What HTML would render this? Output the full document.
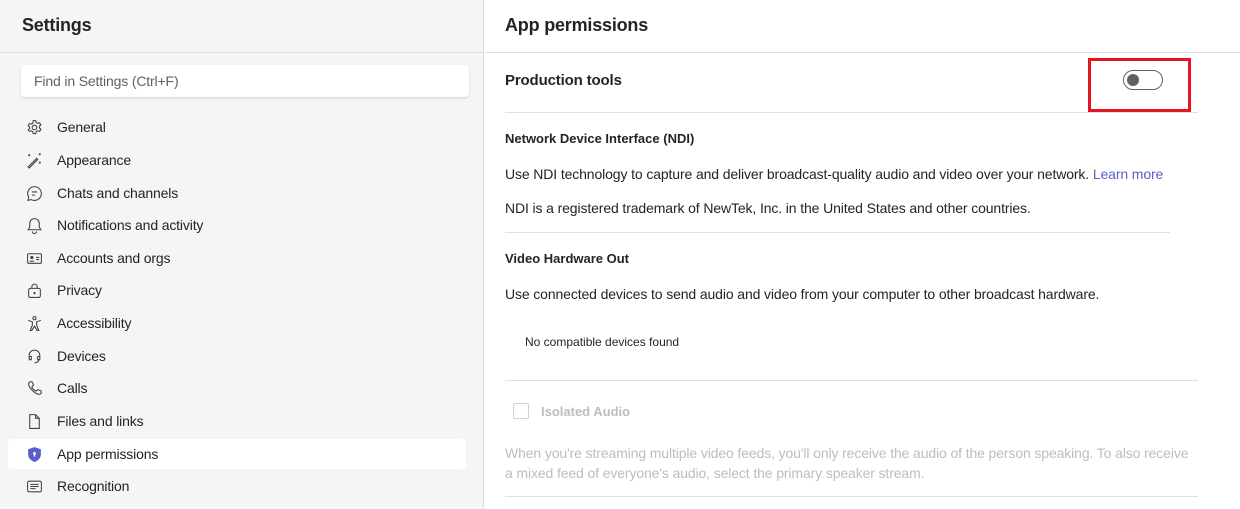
<!DOCTYPE html>
<html><head><style>
*{margin:0;padding:0;box-sizing:border-box}
body{width:1240px;height:509px;overflow:hidden;font-family:"Liberation Sans",sans-serif;color:#242424;background:#fff;position:relative}
.a{position:absolute;white-space:nowrap}
#left{position:absolute;left:0;top:0;width:484px;height:509px;background:#f5f5f5;border-right:1px solid #e0e0e0}
.nav{position:absolute;left:8px;width:458px;height:30px;font-size:14px;line-height:30px;padding-left:49px;letter-spacing:-0.15px}
.nav svg{position:absolute;left:18px;top:7px}
.sel{background:#fff;border-radius:4px}
.hr{position:absolute;height:1px;background:#e0e0e0}
.t{font-size:14px;letter-spacing:-0.12px}
</style></head><body>
<div id="left">
<div class="a" style="left:22px;top:15px;font-size:18px;font-weight:bold;letter-spacing:-0.2px">Settings</div>
<div class="hr" style="left:0;top:52px;width:484px"></div>
<div class="a" style="left:21px;top:65px;width:448px;height:32px;background:#fff;border-radius:4px;box-shadow:0 1px 2px rgba(0,0,0,.15);font-size:14px;line-height:32px;padding-left:13px;color:#616161;letter-spacing:-0.15px">Find in Settings (Ctrl+F)</div>

<div class="nav" style="top:112px"><svg width="17" height="17" viewBox="0 0 16 16" fill="none" stroke="#424242" stroke-width="1"><circle cx="8" cy="8" r="2.2"/><path d="M6.8 1.5h2.4l.4 1.8 1.4.8 1.8-.6 1.2 2.1-1.4 1.2v1.6l1.4 1.2-1.2 2.1-1.8-.6-1.4.8-.4 1.8H6.8l-.4-1.8-1.4-.8-1.8.6L2 10.3l1.4-1.2V7.5L2 6.3l1.2-2.1 1.8.6 1.4-.8z"/></svg>General</div>
<div class="nav" style="top:145px"><svg width="17" height="17" viewBox="0 0 16 16" fill="none" stroke="#424242" stroke-width="1"><path d="M2 14l8-8 1 1-8 8zM3 2v2M2 3h2M13 1v2M12 2h2M13 9v2M12 10h2"/></svg>Appearance</div>
<div class="nav" style="top:178px"><svg width="17" height="17" viewBox="0 0 16 16" fill="none" stroke="#424242" stroke-width="1"><path d="M8 1.5a6.5 6.5 0 1 1-3.2 12.2L1.8 14.5l.8-3A6.5 6.5 0 0 1 8 1.5zM5.5 6.5h5M5.5 9.5h3"/></svg>Chats and channels</div>
<div class="nav" style="top:210px"><svg width="17" height="17" viewBox="0 0 16 16" fill="none" stroke="#424242" stroke-width="1"><path d="M8 1.5c2.5 0 4.5 2 4.5 4.5v3.5l1.5 2.5H2l1.5-2.5V6c0-2.5 2-4.5 4.5-4.5zM6 13.5a2 2 0 0 0 4 0"/></svg>Notifications and activity</div>
<div class="nav" style="top:243px"><svg width="17" height="17" viewBox="0 0 16 16" fill="none" stroke="#424242" stroke-width="1"><rect x="1.5" y="3.5" width="13" height="9" rx="1"/><circle cx="5.5" cy="7" r="1" fill="#424242"/><path d="M3.5 10.5h4M9.5 7h3M9.5 9h3"/></svg>Accounts and orgs</div>
<div class="nav" style="top:275px"><svg width="17" height="17" viewBox="0 0 16 16" fill="none" stroke="#424242" stroke-width="1"><rect x="2.5" y="6" width="11" height="8.5" rx="1.5"/><path d="M5.5 6V4.5a2.5 2.5 0 0 1 5 0V6"/><circle cx="8" cy="10.5" r=".6" fill="#424242"/></svg>Privacy</div>
<div class="nav" style="top:308px"><svg width="17" height="17" viewBox="0 0 16 16" fill="none" stroke="#424242" stroke-width="1"><circle cx="8" cy="3" r="1.5"/><path d="M2 5l4 1.5v3L4 14.5h1.5L8 10.5l2.5 4H12L10 9.5v-3L14 5"/></svg>Accessibility</div>
<div class="nav" style="top:341px"><svg width="17" height="17" viewBox="0 0 16 16" fill="none" stroke="#424242" stroke-width="1"><path d="M3 10V7a5 5 0 0 1 10 0v3M3 8h2v3H3zM11 8h2v3h-2zM12 11c0 2-2 3-4 3"/></svg>Devices</div>
<div class="nav" style="top:373px"><svg width="17" height="17" viewBox="0 0 16 16" fill="none" stroke="#424242" stroke-width="1"><path d="M4 1.5l2 .5 1 3-1.5 1.5c.5 1.5 2.5 3.5 4 4L11 9l3 1 .5 2-1.5 1.5C9 14 2 7 2.5 3z"/></svg>Calls</div>
<div class="nav" style="top:406px"><svg width="17" height="17" viewBox="0 0 16 16" fill="none" stroke="#424242" stroke-width="1"><path d="M3.5 1.5h5.5l3.5 3.5v9.5h-9zM9 1.5V5h3.5"/></svg>Files and links</div>
<div class="nav sel" style="top:439px"><svg width="17" height="17" viewBox="0 0 16 16"><path d="M8 1l6 2v5c0 3.5-3 6-6 7-3-1-6-3.5-6-7V3z" fill="#5b5fc7"/><circle cx="8" cy="7" r="1.3" fill="#fff"/><path d="M7.4 7.5h1.2v2.5H7.4z" fill="#fff"/></svg>App permissions</div>
<div class="nav" style="top:471px"><svg width="17" height="17" viewBox="0 0 16 16" fill="none" stroke="#424242" stroke-width="1"><rect x="1.5" y="3" width="13" height="10" rx="1.5"/><path d="M4 6h8M4 8h8M4 10h5"/></svg>Recognition</div>
</div>

<div class="a" style="left:505px;top:15px;font-size:18px;font-weight:bold;letter-spacing:-0.2px">App permissions</div>
<div class="hr" style="left:485px;top:52px;width:755px"></div>
<div class="a" style="left:505px;top:72px;font-size:15px;font-weight:bold;letter-spacing:-0.15px">Production tools</div>
<div class="a" style="left:1088px;top:58px;width:103px;height:54px;border:3px solid #e3151e"></div>
<div class="a" style="left:1123px;top:70px;width:40px;height:20px;border:1px solid #616161;border-radius:10px"><div style="position:absolute;left:3px;top:3px;width:12px;height:12px;border-radius:50%;background:#616161"></div></div>
<div class="hr" style="left:505px;top:112px;width:693px"></div>
<div class="a" style="left:505px;top:131px;font-size:13px;font-weight:bold">Network Device Interface (NDI)</div>
<div class="a t" style="left:505px;top:166px">Use NDI technology to capture and deliver broadcast-quality audio and video over your network. <span style="color:#5b5fc7">Learn more</span></div>
<div class="a t" style="left:505px;top:200px">NDI is a registered trademark of NewTek, Inc. in the United States and other countries.</div>
<div class="hr" style="left:505px;top:232px;width:665px"></div>
<div class="a" style="left:505px;top:251px;font-size:13px;font-weight:bold">Video Hardware Out</div>
<div class="a t" style="left:505px;top:286px">Use connected devices to send audio and video from your computer to other broadcast hardware.</div>
<div class="a" style="left:525px;top:335px;font-size:12px">No compatible devices found</div>
<div class="hr" style="left:505px;top:380px;width:693px"></div>
<div class="a" style="left:513px;top:403px;width:16px;height:16px;border:1px solid #d1d1d1;border-radius:2px"></div>
<div class="a" style="left:541px;top:404px;font-size:13px;font-weight:bold;color:#bdbdbd">Isolated Audio</div>
<div class="a t" style="left:505px;top:443px;color:#bdbdbd;line-height:20px">When you're streaming multiple video feeds, you'll only receive the audio of the person speaking. To also receive<br>a mixed feed of everyone's audio, select the primary speaker stream.</div>
<div class="hr" style="left:505px;top:496px;width:693px"></div>
</body></html>
